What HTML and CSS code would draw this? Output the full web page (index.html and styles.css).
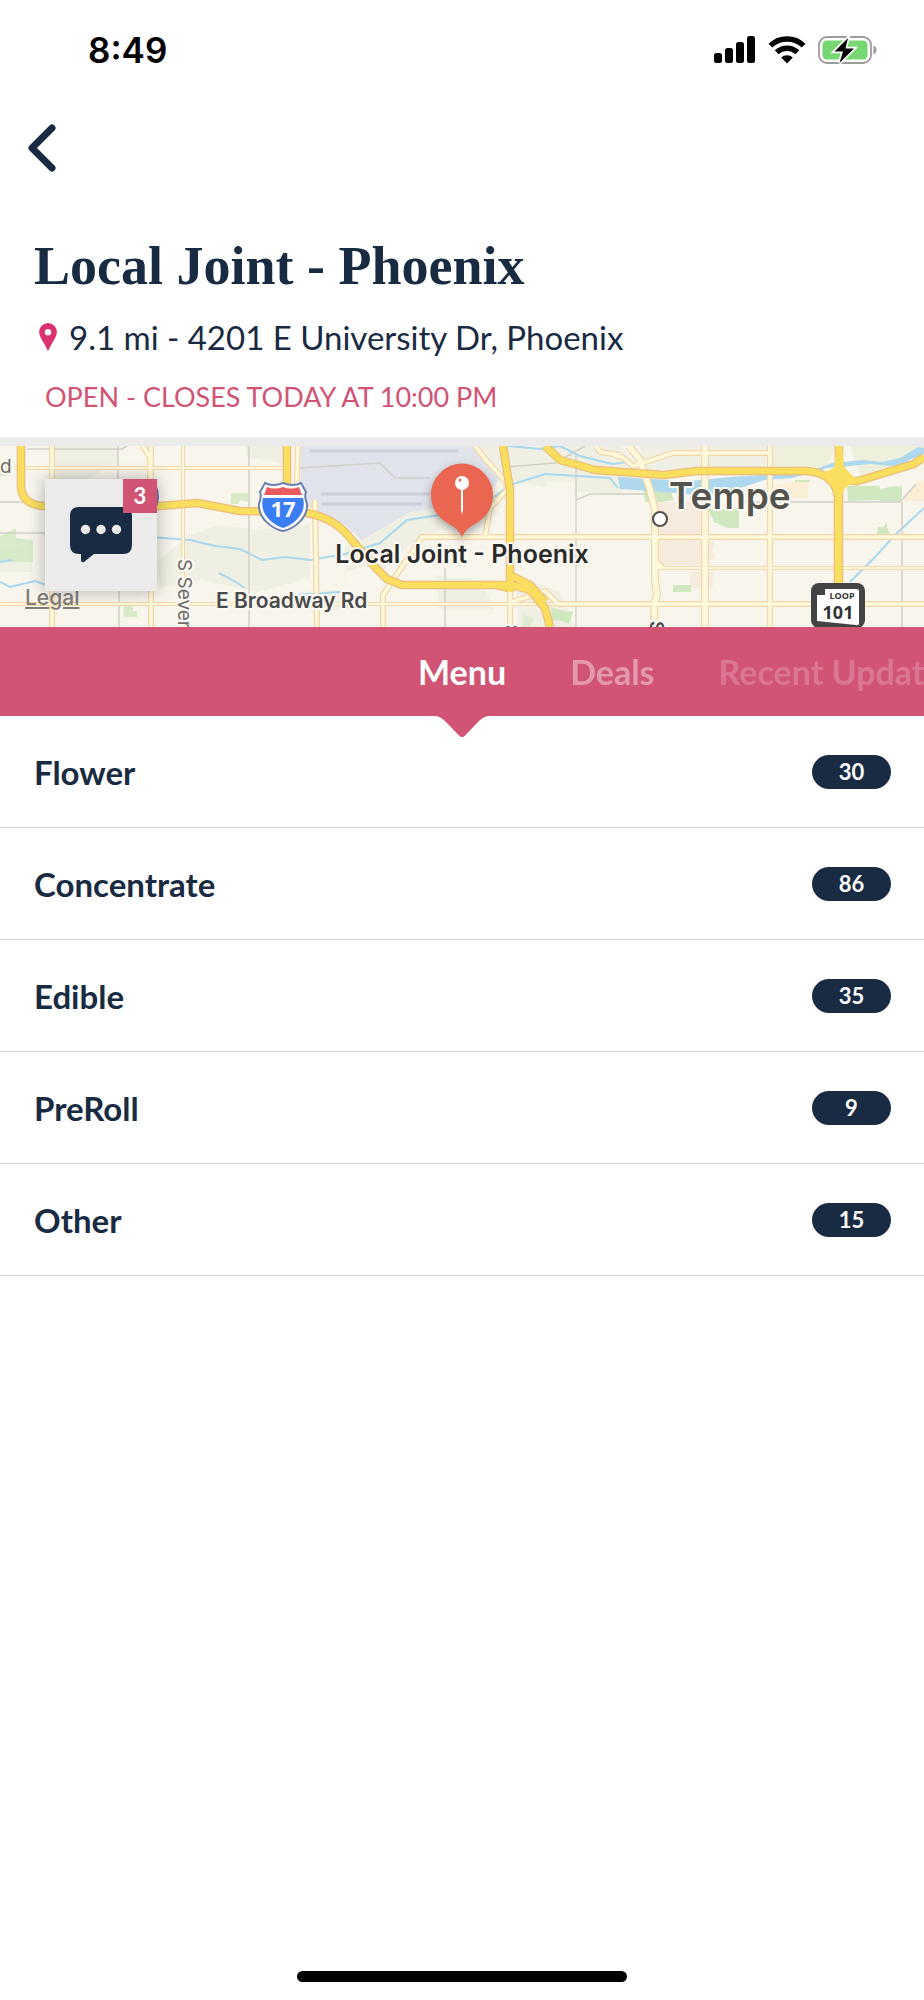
FILE: index.html
```html
<!DOCTYPE html>
<html lang="en">
<head>
<meta charset="utf-8">
<meta name="viewport" content="width=device-width, initial-scale=1">
<title>Local Joint - Phoenix</title>
<link rel="stylesheet" href="styles.css">
</head>
<body>
<div class="screen">
  <div class="status-bar">
    <time class="clock">8:49</time>
    <div class="status-icons">
      <svg width="42" height="28" viewBox="0 0 42 28" aria-label="Signal">
        <rect x="0" y="17" width="8" height="10" rx="2.5"/>
        <rect x="11" y="12" width="8" height="15" rx="2.5"/>
        <rect x="22" y="6" width="8" height="21" rx="2.5"/>
        <rect x="33" y="0" width="8" height="27" rx="2.5"/>
      </svg>
      <svg width="38" height="28" viewBox="0 0 38 28" aria-label="Wi-Fi">
        <g fill="none" stroke="#000" stroke-width="5.4">
          <path d="M2.4 9.6A24 24 0 0 1 35.6 9.6"/>
          <path d="M8.7 16.3A15 15 0 0 1 29.3 16.3"/>
        </g>
        <path d="M13.2 21.6a8.4 8.4 0 0 1 11.6 0L19 27.4z"/>
      </svg>
      <svg width="60" height="28" viewBox="0 0 60 28" aria-label="Battery charging">
        <rect x="1" y="1" width="52" height="26" rx="8" fill="none" stroke="#9b9b9b" stroke-width="1.8"/>
        <rect x="4.500" y="4.500" width="45" height="19" rx="4.500" fill="#76d672"/>
        <path d="M55.500 9.500c4 1.600 4 7.400 0 9z" fill="#9b9b9b"/>
        <path d="M30 2L16.500 15.500H25L21.500 27L36 12.500H27.500z" stroke="#fff" stroke-width="3.500"/>
        <path d="M30 2L16.500 15.500H25L21.500 27L36 12.500H27.500z"/>
      </svg>
    </div>
  </div>

  <header class="header">
    <button class="back" type="button" aria-label="Back">
      <svg width="28" height="48" viewBox="0 0 28 48"><path d="M24 4L4 24L24 44"/></svg>
    </button>
    <h1 class="title">Local Joint - Phoenix</h1>
    <p class="address">
      <svg width="18" height="29" viewBox="0 0 18 29"><path fill-rule="evenodd" d="M9 0a8.800 8.800 0 0 1 8.800 9C17.800 15 11.500 21 9 28.500C6.500 21 .200 15 .200 9A8.800 8.800 0 0 1 9 0zM9 6a3.200 3.200 0 1 0 0 6.400A3.200 3.200 0 0 0 9 6z"/></svg>
      <span>9.1 mi - 4201 E University Dr, Phoenix</span>
    </p>
    <p class="hours">OPEN - CLOSES TODAY AT 10:00 PM</p>
  </header>

  <section class="map" aria-label="Map">
    <svg class="map-art" viewBox="0 446 924 181" preserveAspectRatio="xMidYMid slice">
      <rect y="446" width="924" height="181" fill="#f8f5ed"/>
      <g fill="#efefe3">
        <path d="M52 446H118V462L85 480H52zM246 446H286V464L246 457zM190 535L220 525L262 530L310 525V578L258 592L200 580L160 588L158 560zM345 545L408 510H440V530L410 545L365 580H345zM440 446H620L640 470L620 495L560 490L510 480L492 480L480 500L450 520L500 480zM640 446H770V470H640zM0 550L30 545L33 572H0zM435 575L480 580L495 610L440 610z"/>
        <path d="M516 575L560 592L575 627H518zM300 592L345 590L350 610H318z"/>
      </g>
      <path d="M770 446H837L824 470H770zM850 446H924V458L860 475z" fill="#eff0db"/>
      <path d="M548 482L568 482V495L545 492zM345 572L380 562L372 600L348 596zM523 498L575 480L576 500L530 520zM118 446H135V458H118z" fill="#f8f5ed"/>
      <path d="M301 446H474L500 478L490 492L440 508L410 512L362 540L345 525L318 512L300 498z" fill="#e0e3ea"/>
      <path d="M657 502H705V565H662L657 560zM707 540L714 543L712 552L716 557L709 560L707 558zM690 572H713V588H690z" fill="#f5ecdd"/>
      <path d="M772 486L808 480V498H772zM902 498L918 482L924 480V501H902z" fill="#faefd5"/>
      <g fill="#cfe8bf">
        <path d="M0 463H10V476H0zM231 493H248V502L240 500L238 504H231zM124 606H133V611H137V617H123zM0 536L16 528V538L33 540V562H0z" opacity=".8"/>
        <path d="M551 607L564 611L573 612L569 624L558 620L552 621zM643 486L670 490L674 500L660 502L645 502zM708 509H739V528H728L714 522zM673 585H691V592H673zM847 486H880V500L848 501zM879 490L889 487L902 486V501H880zM878 527L884 527L887 521V527L890 534H877zM795 480H810V482H795z"/>
        <path d="M523 615L534 618L530 627H522z" opacity=".5"/>
      </g>
      <path d="M618 477L650 479L690 481L730 477L780 474L812 471L832 463L862 460L882 462L900 458L918 447L924 448V454L909 460L903 467L870 464L828 468L792 478L765 480L740 488L705 496L685 494L650 491L620 489z" fill="#aed8ee"/>
      <g fill="none" stroke="#a9d8ef" stroke-width="2">
        <path d="M150 537L190 540L215 546L240 549L262 560L285 557L310 560L345 554L380 543L407 520L440 515L490 500L510 485L545 474L610 478L618 488M0 582L10 587L35 581L52 587M219 573L236 582L245 588M850 582L875 557L895 535L924 508M508 446L540 449L560 446L580 456L612 464L630 462M295 595L340 592M0 562L12 560"/>
      </g>
      <g fill="none" stroke="#d2d0ca" stroke-width="1.500">
        <path d="M27 449H122L127 446M118 446V484M119 590V627M249 446V627M0 533H48M0 502H45M300 468L380 463L395 478H430M445 568V627M505 467L555 463L585 446M576 455V627M576 500L590 494L620 494M618 494H650M740 502H900L916 484M902 502V627"/>
      </g>
      <g stroke="#cccfd8" stroke-width="3"><path d="M310 451H458M321 494H430M321 504H422"/></g>
      <g fill="none" stroke-linejoin="round">
        <g stroke="#f3d6aa">
          <path d="M15 468H290M183 446V627M0 604H924M655 568H924" stroke-width="4"/>
          <path d="M52 446V627M143 446L150 458V480M151 446V627M315 500L317 627M383 627V595L422 537H924M510 590V627M475 446L486 460L506 482L507 490L490 508L485 537M596 446L600 452L620 455M614 455L622 457L633 466L673 453H770M770 446V627M510 601H515L545 591L558 604H924M298 446L296 502L312 510" stroke-width="6"/>
          <path d="M629 446L640 460L650 490L655 510V562L662 568M655 560V580L657 595L654 605L655 627M705 446V627" stroke-width="8"/>
        </g>
        <g stroke="#fef9da">
          <path d="M15 468H290M183 446V627M0 604H924M655 568H924" stroke-width="2"/>
          <path d="M52 446V627M143 446L150 458V480M151 446V627M315 500L317 627M383 627V595L422 537H924M510 590V627M475 446L486 460L506 482L507 490L490 508L485 537M596 446L600 452L620 455M614 455L622 457L633 466L673 453H770M770 446V627M510 601H515L545 591L558 604H924M298 446L296 502L312 510" stroke-width="3.500"/>
          <path d="M629 446L640 460L650 490L655 510V562L662 568M655 560V580L657 595L654 605L655 627M705 446V627" stroke-width="5.500"/>
        </g>
      </g>
      <g fill="none" stroke-linejoin="round">
        <path stroke="#edbd79" stroke-width="8.500" d="M21 446V488Q23 504 42 506H160L197 503L240 511L300 512Q328 515 345 532L375 567L387 579L402 585H512L530 590L545 608L550 627M287 446V490M503 446L510 490V592M495 585L510 588M512 576L530 585L545 602M545 446L560 460L595 470L664 475L697 471H808Q836 474 838 498V610M839 446V610M839 462Q842 483 858 481L914 464L924 457"/>
        <path stroke="#fadf5e" stroke-width="6" d="M21 446V488Q23 504 42 506H160L197 503L240 511L300 512Q328 515 345 532L375 567L387 579L402 585H512L530 590L545 608L550 627M287 446V490M503 446L510 490V592M495 585L510 588M512 576L530 585L545 602M545 446L560 460L595 470L664 475L697 471H808Q836 474 838 498V610M839 446V610M839 462Q842 483 858 481L914 464L924 457"/>
        <path fill="#fadf5e" d="M823 473L834 468L837 446H842L844 467L857 480L845 488L840 500L835 490z"/>
      </g>
      <g transform="translate(283 507)">
        <path d="M-18 -24Q-10 -20 0 -24Q10 -20 18 -24L23 -15Q21 -11 24 -3C25 12 10 22 0 24C-10 22 -25 12 -24 -3Q-21 -11 -23 -15z" fill="#fff" stroke="#6b7fb2" stroke-width="2"/>
        <path d="M-16 -20Q-8 -17 0 -20Q8 -17 16 -20L19 -12H-19z" fill="#eb5a5e"/>
        <path d="M-20 -9H20C24 6 12 17 0 21C-12 17 -24 6 -20 -9z" fill="#3b7df5"/>
        <text class="shield" y="10">17</text>
      </g>
      <path d="M155 484Q161 497 155 509" fill="none" stroke="#6b7fb2" stroke-width="2"/>
      <circle cx="660" cy="519" r="7" fill="#fff" stroke="#54544f" stroke-width="2.200"/>
      <g transform="translate(811 583)">
        <rect width="54" height="45" rx="8" fill="#444"/>
        <path d="M14 6H46Q48 6 48 8V40Q48 43 45 42L6 38V12H14z" fill="#fff"/>
        <text class="loop" x="31" y="16">LOOP</text>
        <text class="route" x="27" y="36">101</text>
      </g>
      <g class="labels">
        <text class="street" x="0" y="473">d</text>
        <text class="street" transform="translate(178 559) rotate(90)">S Seventh Ave</text>
        <text class="cross-street" transform="translate(505 625) rotate(90)">S</text>
        <text class="cross-street" transform="translate(650 621) rotate(90)">S Rural Rd</text>
        <text class="road" x="216" y="608">E Broadway Rd</text>
        <text class="city" x="669" y="509">Tempe</text>
        <text class="place" x="462" y="563">Local Joint - Phoenix</text>
      </g>
      <g class="pin">
        <path d="M462 463.500C479 463.500 493 478 493 495C493 508 486 518 475 524Q466 528 462 537Q458 528 449 524C438 518 431 508 431 495C431 478 445 463.500 462 463.500z" fill="#eb6650"/>
      </g>
      <path d="M461 488H463V510L462 515L461 510z" fill="#fff"/>
      <circle cx="462" cy="483" r="7" fill="#fff"/>
      <circle cx="460" cy="480" r="1.500" fill="#eb6650"/>
    </svg>
    <a class="legal" href="#legal">Legal</a>
    <button class="chat" type="button" aria-label="Messages, 3 unread">
      <svg width="62" height="56" viewBox="0 0 62 56">
        <path d="M9 0H53Q62 0 62 9V38Q62 47 53 47H24L14 55Q11 56 11 52V47H9Q0 47 0 38V9Q0 0 9 0z" fill="#192b42"/>
        <g fill="#ebebeb"><circle cx="15.500" cy="22.500" r="4.700"/><circle cx="31" cy="22.500" r="4.700"/><circle cx="46.500" cy="22.500" r="4.700"/></g>
      </svg>
      <span class="unread">3</span>
    </button>
  </section>

  <nav class="tabs" aria-label="Sections">
    <div class="tab-strip">
      <button class="tab tab-active" type="button">Menu</button>
      <button class="tab tab-next" type="button">Deals</button>
      <button class="tab tab-far" type="button">Recent Updates</button>
    </div>
    <svg class="tab-arrow" width="64" height="23" viewBox="0 0 64 23"><path d="M0 0V1Q9 0 15 6L29 20.500Q32 23.500 35 20.500L49 6Q55 0 64 1V0z"/></svg>
  </nav>

  <main>
    <ul class="menu">
      <li><a class="row" href="#flower"><span>Flower</span><span class="count">30</span></a></li>
      <li><a class="row" href="#concentrate"><span>Concentrate</span><span class="count">86</span></a></li>
      <li><a class="row" href="#edible"><span>Edible</span><span class="count">35</span></a></li>
      <li><a class="row" href="#preroll"><span>PreRoll</span><span class="count">9</span></a></li>
      <li><a class="row" href="#other"><span>Other</span><span class="count">15</span></a></li>
    </ul>
  </main>
  <div class="home-indicator"></div>
</div>
</body>
</html>
```
FILE: styles.css
```css
:root {
  --navy: #192b42;
  --rose: #d15475;
  --sans: Lato, "Open Sans", sans-serif;
  --system: Inter, "Liberation Sans", sans-serif;
}

* {
  box-sizing: border-box;
}

body {
  margin: 0;
  background: #fff;
  color: var(--navy);
  font-family: var(--sans);
}

button {
  padding: 0;
  border: 0;
  background: none;
  color: inherit;
  font: inherit;
}

h1,
p,
ul {
  margin: 0;
  padding: 0;
}

.screen {
  display: flex;
  flex-direction: column;
  min-height: 100vh;
}

.status-bar {
  display: flex;
  align-items: center;
  justify-content: space-between;
  height: 100px;
  padding: 0 46px 0 88px;
  color: #000;
  font-family: var(--system);
}

.clock {
  font-size: 35px;
  font-weight: 600;
}

.status-icons {
  display: flex;
  gap: 12px;
}

.header {
  display: flex;
  flex-direction: column;
  align-items: flex-start;
  padding: 24px 32px 22px 28px;
  border-bottom: 9px solid #ebebeb;
}

.back {
  display: flex;
}

.back path {
  fill: none;
  stroke: var(--navy);
  stroke-width: 7;
  stroke-linecap: round;
  stroke-linejoin: round;
}

.title {
  margin: 62px 0 0 6px;
  font: bold 54px/64px "Liberation Serif", "Times New Roman", serif;
}

.address {
  display: flex;
  align-items: center;
  gap: 12px;
  margin: 17px 0 0 11px;
  font-size: 33px;
  line-height: 44px;
}

.address svg {
  fill: #d83273;
}

.hours {
  margin: 20px 0 0 17px;
  color: var(--rose);
  font-size: 27px;
  line-height: 36px;
}

.map {
  position: relative;
  height: 181px;
  overflow: hidden;
}

.map-art {
  display: block;
  width: 100%;
  height: 100%;
  font-family: var(--system);
}

.labels {
  paint-order: stroke;
  stroke: #fbf9f3;
  stroke-width: 4px;
  stroke-linejoin: round;
}

.street {
  fill: #6b6b69;
  font-size: 19px;
}

.cross-street {
  fill: #4a4a4a;
  font-size: 18px;
  font-weight: 600;
}

.road {
  fill: #4a4a4a;
  font-size: 21px;
  font-weight: 600;
}

.city {
  fill: #54544f;
  font-size: 37px;
  font-weight: 600;
}

.place {
  fill: #2a2a2a;
  font-size: 25px;
  font-weight: 600;
  text-anchor: middle;
}

.shield {
  fill: #fff;
  font: bold 22px "Open Sans", sans-serif;
  text-anchor: middle;
}

.loop {
  fill: #333;
  font: bold 9px "Open Sans", sans-serif;
  text-anchor: middle;
}

.route {
  fill: #333;
  font: bold 18px "Open Sans", sans-serif;
  text-anchor: middle;
}

.pin {
  filter: drop-shadow(0 4px 5px rgb(0 0 0 / 35%));
}

.legal {
  position: absolute;
  bottom: 17px;
  left: 25px;
  color: #7e7d7a;
  font: 500 21px/24px var(--system);
  text-underline-offset: 2px;
}

.chat {
  position: absolute;
  top: 33px;
  left: 45px;
  display: grid;
  place-items: center;
  width: 112px;
  height: 112px;
  background: #ebebeb;
  box-shadow: 0 0 16px rgb(0 0 0 / 30%);
}

.unread {
  position: absolute;
  top: 0;
  right: 0;
  width: 34px;
  background: var(--rose);
  color: #fff;
  font-size: 22px;
  font-weight: 700;
  line-height: 34px;
}

.tabs {
  position: relative;
  background: var(--rose);
  color: #fff;
}

.tab-strip {
  display: flex;
  gap: 64px;
  height: 89px;
  padding-left: calc(50% - 44px);
  overflow: hidden;
}

.tab {
  flex: none;
  font-size: 34px;
  font-weight: 700;
  white-space: nowrap;
}

.tab-next {
  opacity: 0.4;
}

.tab-far {
  opacity: 0.2;
}

.tab-arrow {
  position: absolute;
  top: calc(100% - 1px);
  left: calc(50% - 32px);
  fill: var(--rose);
}

.menu {
  list-style: none;
}

.row {
  display: flex;
  align-items: center;
  justify-content: space-between;
  height: 112px;
  padding: 0 33px 0 34px;
  border-bottom: 1px solid #d3d4d6;
  color: inherit;
  font-size: 33px;
  font-weight: 700;
  text-decoration: none;
}

.count {
  width: 79px;
  border-radius: 17px;
  background: var(--navy);
  color: #fff;
  font-size: 22px;
  line-height: 34px;
  text-align: center;
}

.home-indicator {
  width: 330px;
  height: 11px;
  margin: auto auto 18px;
  border-radius: 6px;
  background: #000;
}
```
